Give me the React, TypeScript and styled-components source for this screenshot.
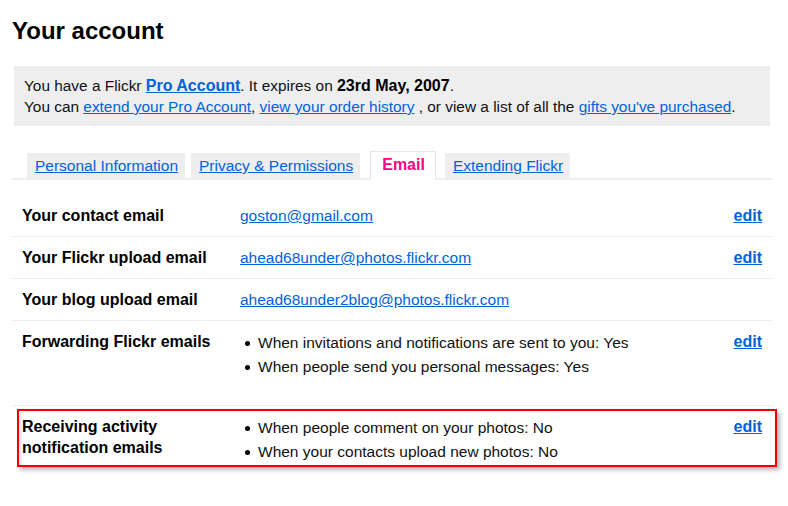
import React from "react";
import styled, { createGlobalStyle } from "styled-components";

const Global = createGlobalStyle`
  html, body { margin: 0; padding: 0; background: #fff; }
  body { font-family: "Liberation Sans", Arial, sans-serif; color: #000; }
  a { color: #0063dc; text-decoration: underline; }
`;

const Page = styled.div`
  width: 760px;
  padding: 17px 0 0 12px;
`;

const Title = styled.h1`
  margin: 0;
  font-size: 24px;
  line-height: 28px;
  font-weight: bold;
`;

const Notice = styled.div`
  margin: 21px 2px 0;
  background: #eeeeee;
  padding: 9px 10px;
  font-size: 15.4px;
  line-height: 21px;
  white-space: nowrap;
  color: #111;
  b { font-size: 16px; }
`;

const Strong = styled.b`
  color: #000;
`;

const TabBar = styled.div`
  display: flex;
  align-items: flex-end;
  gap: 6px;
  margin-top: 25px;
  padding-left: 15px;
  border-bottom: 2px solid #eeeeee;
`;

const Tab = styled.a<{ $active?: boolean }>`
  display: block;
  font-size: ${(p) => (p.$active ? "16px" : "15.5px")};
  text-decoration: ${(p) => (p.$active ? "none" : "underline")};
  color: ${(p) => (p.$active ? "#ff0084" : "#0063dc")};
  font-weight: ${(p) => (p.$active ? "bold" : "normal")};
  background: ${(p) => (p.$active ? "#fff" : "#eeeeee")};
  height: ${(p) => (p.$active ? "28px" : "25px")};
  line-height: ${(p) => (p.$active ? "26px" : "25px")};
  padding: ${(p) => (p.$active ? "0 10px 0 11px" : "0 7px 0 8px")};
  margin: ${(p) => (p.$active ? "0 3px -2px 4px" : "0")};
  border: ${(p) => (p.$active ? "1px solid #e6e6e6" : "none")};
  border-bottom: none;
`;

const Rows = styled.div`
  margin-top: 15px;
`;

const Row = styled.div<{ $last?: boolean }>`
  position: relative;
  display: grid;
  grid-template-columns: 218px 1fr auto;
  padding: 10px 10px;
  border-bottom: ${(p) => (p.$last ? "none" : "1px solid #eeeeee")};
  font-size: 15.5px;
  line-height: 21px;
`;

const Label = styled.div`
  font-weight: bold;
  font-size: 16px;
`;

const Value = styled.div``;

const Edit = styled.a`
  font-weight: bold;
  font-size: 16px;
`;

const Bullets = styled.ul`
  list-style: none;
  margin: 0 0 16px;
  padding: 0;
`;

const Bullet = styled.li`
  position: relative;
  line-height: 24px;
  padding-left: 18px;
  color: #111;
  &::before {
    content: "";
    position: absolute;
    left: 5px;
    top: 10px;
    width: 5px;
    height: 5px;
    border-radius: 50%;
    background: #000;
  }
`;

const Highlight = styled.div`
  position: absolute;
  top: 3px;
  left: 5px;
  right: -5px;
  height: 58px;
  box-sizing: border-box;
  border: 2px solid #ee0000;
  box-shadow: 3px 3px 4px rgba(0, 0, 0, 0.28), inset 4px 0 4px -2px rgba(0, 0, 0, 0.12);
  pointer-events: none;
`;

export default function App() {
  return (
    <>
      <Global />
      <Page>
        <Title>Your account</Title>
        <Notice>
          You have a Flickr <a href="#"><b>Pro Account</b></a>. It expires on <Strong>23rd May, 2007</Strong>.
          <br />
          You can <a href="#">extend your Pro Account</a>, <a href="#">view your order history</a> , or view a list of all the <a href="#">gifts you've purchased</a>.
        </Notice>
        <TabBar>
          <Tab href="#">Personal Information</Tab>
          <Tab href="#">Privacy &amp; Permissions</Tab>
          <Tab $active>Email</Tab>
          <Tab href="#">Extending Flickr</Tab>
        </TabBar>
        <Rows>
          <Row>
            <Label>Your contact email</Label>
            <Value><a href="#">goston@gmail.com</a></Value>
            <Edit href="#">edit</Edit>
          </Row>
          <Row>
            <Label>Your Flickr upload email</Label>
            <Value><a href="#">ahead68under@photos.flickr.com</a></Value>
            <Edit href="#">edit</Edit>
          </Row>
          <Row>
            <Label>Your blog upload email</Label>
            <Value><a href="#">ahead68under2blog@photos.flickr.com</a></Value>
            <span />
          </Row>
          <Row>
            <Label>Forwarding Flickr emails</Label>
            <Bullets>
              <Bullet>When invitations and notifications are sent to you: Yes</Bullet>
              <Bullet>When people send you personal messages: Yes</Bullet>
            </Bullets>
            <Edit href="#">edit</Edit>
          </Row>
          <Row $last>
            <Label>Receiving activity notification emails</Label>
            <Bullets>
              <Bullet>When people comment on your photos: No</Bullet>
              <Bullet>When your contacts upload new photos: No</Bullet>
            </Bullets>
            <Edit href="#">edit</Edit>
            <Highlight />
          </Row>
        </Rows>
      </Page>
    </>
  );
}
